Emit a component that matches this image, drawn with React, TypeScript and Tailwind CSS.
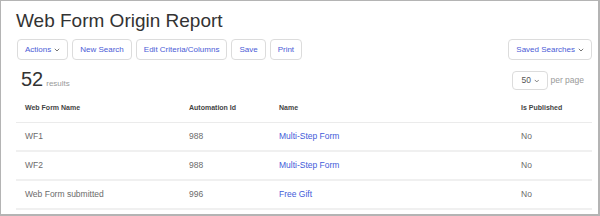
import React from 'react'

const font = { fontFamily: '"Liberation Sans", Arial, sans-serif' }

function Chevron() {
  return (
    <svg width="6" height="4" viewBox="0 0 6 4" className="ml-[3px]">
      <path d="M0.8 0.8 L3 3 L5.2 0.8" fill="none" stroke="#666" strokeWidth="0.9" />
    </svg>
  )
}

function Btn({ children, caret }: { children: React.ReactNode; caret?: boolean }) {
  return (
    <button className="h-[21px] px-[7px] flex items-center rounded-[4px] border border-[#dcdcdc] bg-white text-[8px] text-[#4a5bd6]">
      {children}
      {caret && <Chevron />}
    </button>
  )
}

const rows = [
  { name: 'WF1', id: '988', form: 'Multi-Step Form', pub: 'No' },
  { name: 'WF2', id: '988', form: 'Multi-Step Form', pub: 'No' },
  { name: 'Web Form submitted', id: '996', form: 'Free Gift', pub: 'No' },
]

export default function App() {
  return (
    <div
      style={font}
      className="w-[600px] h-[216px] bg-white border-t border-l border-r-2 border-b-2 border-[#b4b4b4] pl-[15px] pr-[6px] overflow-hidden"
    >
      {/* Title */}
      <h1 className="pt-[8px] h-[38px] text-[19px] leading-[24px] text-[#333]">Web Form Origin Report</h1>

      {/* Toolbar */}
      <div className="flex items-center justify-between">
        <div className="flex gap-[4px] pl-[1px]">
          <Btn caret>Actions</Btn>
          <Btn>New Search</Btn>
          <Btn>Edit Criteria/Columns</Btn>
          <Btn>Save</Btn>
          <Btn>Print</Btn>
        </div>
        <Btn caret>Saved Searches</Btn>
      </div>

      {/* Results count */}
      <div className="mt-[9px] h-[21px] flex items-end justify-between">
        <div className="flex items-baseline pl-[5px]">
          <span className="text-[20px] leading-[20px] text-[#333]">52</span>
          <span className="ml-[3px] text-[8px] text-[#999]">results</span>
        </div>
        <div className="flex items-center pr-[8px]">
          <div className="h-[19px] w-[36px] rounded-[4px] border border-[#dcdcdc] flex items-center justify-between px-[8px] text-[8.5px] text-[#555]">
            <span>50</span>
            <Chevron />
          </div>
          <span className="ml-[2px] text-[8.5px] text-[#999]">per page</span>
        </div>
      </div>

      {/* Table */}
      <table className="mt-[4px] w-[576px] border-collapse">
        <thead>
          <tr className="h-[28px] border-b border-[#ebebeb]">
            <th className="w-[164px] pl-[9px] text-left text-[7px] font-bold text-[#444]">Web Form Name</th>
            <th className="w-[90px] pl-[9px] text-left text-[7px] font-bold text-[#444]">Automation Id</th>
            <th className="w-[242px] pl-[9px] text-left text-[7px] font-bold text-[#444]">Name</th>
            <th className="pl-[9px] text-left text-[7px] font-bold text-[#444]">Is Published</th>
          </tr>
        </thead>
        <tbody>
          {rows.map((r, i) => (
            <tr key={i} className="h-[29px] border-b-2 border-[#f0f0f0]">
              <td className="pl-[9px] text-[8.5px] text-[#6b6b6b]">{r.name}</td>
              <td className="pl-[9px] text-[8.5px] text-[#6b6b6b]">{r.id}</td>
              <td className="pl-[9px] text-[8.5px] text-[#3f5bd9]">{r.form}</td>
              <td className="pl-[9px] text-[8.5px] text-[#6b6b6b]">{r.pub}</td>
            </tr>
          ))}
        </tbody>
      </table>
    </div>
  )
}
